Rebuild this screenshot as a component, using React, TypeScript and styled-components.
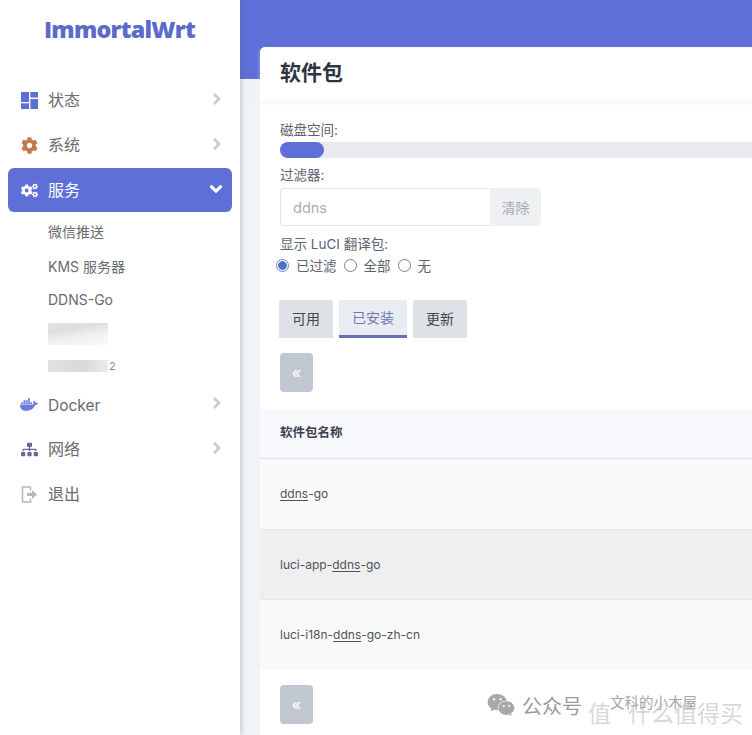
import React from "react";
import styled, { createGlobalStyle } from "styled-components";
import { FaCog, FaCogs, FaDocker, FaSitemap, FaAngleRight, FaAngleDown, FaWeixin } from "react-icons/fa";

const FONT = `Inter, "Noto Sans CJK SC", "Liberation Sans", sans-serif`;
const ACCENT = "#5e6fd8";

const Global = createGlobalStyle`
  html, body { margin: 0; padding: 0; width: 752px; height: 735px; overflow: hidden; background: #f1f3f9; }
  #root { width: 752px; height: 735px; }
  * { box-sizing: border-box; }
  body { font-family: ${FONT}; color: #525f6f; }
`;

const Shell = styled.div`
  position: relative;
  display: flex;
  width: 752px;
  height: 735px;
  overflow: hidden;
`;

const Sidebar = styled.aside`
  flex: 0 0 240px;
  height: 100%;
  background: #fff;
  box-shadow: 1px 0 5px rgba(90, 95, 120, 0.32);
  z-index: 1;
  padding: 0 8px;
`;

const Logo = styled.div`
  height: 78px;
  padding: 14px 0 0 36px;
  font-family: "Open Sans", sans-serif;
  font-size: 23.3px;
  line-height: 30px;
  font-weight: 800;
  letter-spacing: -0.75px;
  color: #5b6bc9;
  white-space: nowrap;
`;

const NavList = styled.nav`
  display: flex;
  flex-direction: column;
`;

const NavItem = styled.div<{ $active?: boolean }>`
  display: flex;
  align-items: center;
  height: 44px;
  margin-bottom: ${(p) => (p.$active ? "4px" : "1px")};
  padding: 0 6px 0 12px;
  border-radius: 6px;
  font-size: 16px;
  color: ${(p) => (p.$active ? "#fff" : "#666a72")};
  background: ${(p) => (p.$active ? ACCENT : "transparent")};
`;

const NavIcon = styled.span<{ $color?: string }>`
  display: flex;
  align-items: center;
  justify-content: center;
  flex: 0 0 18px;
  width: 18px;
  height: 18px;
  margin-right: 10px;
  color: ${(p) => p.$color ?? "inherit"};
`;

const NavLabel = styled.span<{ $latin?: boolean }>`
  flex: 1;
  margin-top: ${(p) => (p.$latin ? "2px" : "-2px")};
  font-size: ${(p) => (p.$latin ? "15.5px" : "16px")};
`;

const Chevron = styled.span<{ $active?: boolean }>`
  display: flex;
  margin-top: -2px;
  font-size: ${(p) => (p.$active ? "20px" : "18px")};
  color: ${(p) => (p.$active ? "#fff" : "#c9cbd0")};
`;

const SubItem = styled.div<{ $pad?: string; $h?: number }>`
  display: flex;
  align-items: center;
  height: ${(p) => p.$h ?? 33}px;
  padding: ${(p) => p.$pad ?? "0"};
  padding-left: 40px;
  font-size: 14px;
  color: #666b74;
`;

const Redacted = styled.div<{ $w: number; $h: number; $fade?: boolean }>`
  width: ${(p) => p.$w}px;
  height: ${(p) => p.$h}px;
  background: ${(p) =>
    p.$fade
      ? "linear-gradient(170deg,#e3e3e3 0%,#dedede 30%,#f0f0f0 60%,#fafafa 100%)"
      : "linear-gradient(90deg,#e2e2e2 0%,#d9d9d9 60%,#ececec 100%)"};
`;

const RedactedTail = styled.span`
  margin-left: 1px;
  font-size: 11px;
  line-height: 13px;
  color: #8d8d8d;
`;

const Main = styled.main`
  flex: 1;
  min-width: 0;
  height: 100%;
`;

const Band = styled.div`
  height: 79px;
  background: ${ACCENT};
`;

const Card = styled.section`
  margin: -32px 0 0 20px;
  width: 520px;
  height: 700px;
  background: #fff;
  border-top-left-radius: 5px;
`;

const CardHeader = styled.header`
  height: 54px;
  padding: 0 0 7px 20px;
  display: flex;
  align-items: center;
  font-size: 21px;
  font-weight: 700;
  color: #2f3342;
  box-shadow: 0 3px 4px rgba(240, 240, 245, 0.5);
`;

const Body = styled.div`
  padding: 20px 0 0 20px;
`;

const FieldLabel = styled.div`
  font-size: 13.5px;
  line-height: 18px;
  color: #5d6470;
`;

const Track = styled.div`
  height: 16px;
  margin: 3px 0 8px;
  background: #e9eaed;
  border-radius: 8px 0 0 8px;
`;

const Fill = styled.div`
  width: 44px;
  height: 100%;
  border-radius: 8px;
  background: ${ACCENT};
`;

const FilterRow = styled.div`
  display: flex;
  margin-top: 4px;
  height: 38px;
`;

const FilterInput = styled.div`
  width: 210px;
  padding-left: 12px;
  display: flex;
  align-items: center;
  font-size: 14.5px;
  color: #a8adb5;
  border: 1px solid #e4e6ea;
  border-right: 0;
  border-radius: 4px 0 0 4px;
`;

const ClearButton = styled.div`
  width: 51px;
  display: flex;
  align-items: center;
  justify-content: center;
  font-size: 14px;
  color: #a3a9b2;
  background: #eff0f1;
  border-radius: 0 4px 4px 0;
`;

const LuciLabel = styled(FieldLabel)`
  margin-top: 9px;
`;

const RadioRow = styled.div`
  display: flex;
  align-items: center;
  margin: 2px 0 0 -4px;
  height: 20px;
  font-size: 13.5px;
  color: #5d6470;
`;

const Radio = styled.span<{ $on?: boolean }>`
  flex: 0 0 13px;
  width: 13px;
  height: 13px;
  margin-right: 7px;
  border-radius: 50%;
  border: 1px solid ${(p) => (p.$on ? "#6d85c8" : "#7b7f86")};
  background: ${(p) => (p.$on ? "radial-gradient(circle,#4a73c9 0 4px,#fff 4.6px)" : "#fff")};
`;

const RadioText = styled.span`
  margin-right: 7px;
`;

const Tabs = styled.div`
  display: flex;
  gap: 6px;
  margin: 25px 0 0 -1px;
`;

const Tab = styled.div<{ $active?: boolean }>`
  height: 38px;
  padding: 0 13px 2px;
  display: flex;
  align-items: center;
  font-size: 14px;
  color: ${(p) => (p.$active ? "#6e79b8" : "#42474f")};
  background: ${(p) => (p.$active ? "#eaecf3" : "#dee1e6")};
  border-radius: 3px 3px 0 0;
  border-bottom: ${(p) => (p.$active ? "3px solid #6670b4" : "0")};
`;

const PageButton = styled.div`
  width: 33px;
  height: 39px;
  display: flex;
  align-items: center;
  justify-content: center;
  margin-top: 15px;
  font-size: 15px;
  font-weight: 700;
  color: #f2f3f5;
  background: #c1c7d0;
  border-radius: 4px;
`;

const Table = styled.div`
  margin: 17px 0 0 -20px;
`;

const HeadRow = styled.div`
  height: 50px;
  padding: 0 0 4px 20px;
  display: flex;
  align-items: center;
  font-size: 12.5px;
  font-weight: 700;
  color: #3a4050;
  background: #f6f8fc;
  border-bottom: 1px solid #dfe2ea;
`;

const Row = styled.div<{ $shade: string; $h: number }>`
  height: ${(p) => p.$h}px;
  padding: 0 0 1px 20px;
  display: flex;
  align-items: center;
  font-size: 12px;
  color: #4d535c;
  background: ${(p) => p.$shade};
  border-bottom: 1px solid #e6e6e8;
  &:last-child {
    border-bottom: 0;
  }
`;

const Hit = styled.u`
  text-decoration: underline;
  text-underline-offset: 2px;
`;

const Watermark = styled.div`
  position: absolute;
  left: 487px;
  top: 692px;
  display: flex;
  align-items: center;
  height: 26px;
  color: #9a9a9a;
  font-size: 20px;
  z-index: 2;
`;

const WatermarkIcon = styled.span`
  display: flex;
  font-size: 28px;
  margin-right: 7px;
  color: #a8a8a8;
`;

const WatermarkName = styled.span`
  position: absolute;
  left: 123px;
  top: -1px;
  font-size: 14.5px;
  white-space: nowrap;
  color: #a8a8a8;
`;

const WatermarkOverlay = styled.span`
  position: absolute;
  left: 101px;
  top: 3px;
  display: flex;
  gap: 17px;
  font-size: 23px;
  white-space: nowrap;
  color: rgba(175, 175, 175, 0.5);
`;

const DashIcon = () => (
  <svg width="17" height="17" viewBox="0 0 17 17" fill="#5e6fd0">
    <rect x="0" y="0" width="8" height="10" />
    <rect x="9.4" y="0" width="7.6" height="5.5" />
    <rect x="0" y="11.3" width="8" height="5.7" />
    <rect x="9.4" y="7" width="7.6" height="10" />
  </svg>
);

const ExitIcon = () => (
  <svg width="17" height="17" viewBox="0 0 17 17" fill="none">
    <path d="M9.5 1H1.5v15h8v-3.5" stroke="#b5b8bc" strokeWidth="1.6" />
    <path d="M9.5 1v3.5" stroke="#b5b8bc" strokeWidth="1.6" />
    <path d="M6 7h5V4l5 4.5-5 4.5v-3H6z" fill="#b5b8bc" />
  </svg>
);

const Arrow = () => (
  <Chevron>
    <FaAngleRight />
  </Chevron>
);

export default function App() {
  return (
    <Shell>
      <Global />
      <Sidebar>
        <Logo>ImmortalWrt</Logo>
        <NavList>
          <NavItem>
            <NavIcon><DashIcon /></NavIcon>
            <NavLabel>状态</NavLabel>
            <Arrow />
          </NavItem>
          <NavItem>
            <NavIcon $color="#c4784e"><FaCog size={17} /></NavIcon>
            <NavLabel>系统</NavLabel>
            <Arrow />
          </NavItem>
          <NavItem $active>
            <NavIcon><FaCogs size={17} /></NavIcon>
            <NavLabel>服务</NavLabel>
            <Chevron $active><FaAngleDown /></Chevron>
          </NavItem>
          <SubItem $pad="0 0 4px">微信推送</SubItem>
          <SubItem>KMS 服务器</SubItem>
          <SubItem $pad="2px 0 0">DDNS-Go</SubItem>
          <SubItem $pad="4px 0 0"><Redacted $w={60} $h={22} $fade /></SubItem>
          <SubItem $pad="2px 0 0" $h={34}><Redacted $w={60} $h={12} /><RedactedTail>2</RedactedTail></SubItem>
          <NavItem>
            <NavIcon $color="#6a7ae0"><FaDocker size={19} /></NavIcon>
            <NavLabel $latin>Docker</NavLabel>
            <Arrow />
          </NavItem>
          <NavItem>
            <NavIcon $color="#666a92"><FaSitemap size={17} /></NavIcon>
            <NavLabel>网络</NavLabel>
            <Arrow />
          </NavItem>
          <NavItem>
            <NavIcon><ExitIcon /></NavIcon>
            <NavLabel>退出</NavLabel>
          </NavItem>
        </NavList>
      </Sidebar>
      <Main>
        <Band />
        <Card>
          <CardHeader>软件包</CardHeader>
          <Body>
            <FieldLabel>磁盘空间:</FieldLabel>
            <Track><Fill /></Track>
            <FieldLabel>过滤器:</FieldLabel>
            <FilterRow>
              <FilterInput>ddns</FilterInput>
              <ClearButton>清除</ClearButton>
            </FilterRow>
            <LuciLabel>显示 LuCI 翻译包:</LuciLabel>
            <RadioRow>
              <Radio $on /><RadioText>已过滤</RadioText>
              <Radio /><RadioText>全部</RadioText>
              <Radio /><RadioText>无</RadioText>
            </RadioRow>
            <Tabs>
              <Tab>可用</Tab>
              <Tab $active>已安装</Tab>
              <Tab>更新</Tab>
            </Tabs>
            <PageButton>«</PageButton>
            <Table>
              <HeadRow>软件包名称</HeadRow>
              <Row $shade="#fafafa" $h={71}><span><Hit>ddns</Hit>-go</span></Row>
              <Row $shade="#efefef" $h={70}><span>luci-app-<Hit>ddns</Hit>-go</span></Row>
              <Row $shade="#f9f9f9" $h={70}><span>luci-i18n-<Hit>ddns</Hit>-go-zh-cn</span></Row>
            </Table>
            <PageButton>«</PageButton>
          </Body>
        </Card>
      </Main>
      <Watermark>
        <WatermarkIcon><FaWeixin /></WatermarkIcon>
        公众号
        <WatermarkName>文科的小木屋</WatermarkName>
        <WatermarkOverlay><span>值</span><span>什么值得买</span></WatermarkOverlay>
      </Watermark>
    </Shell>
  );
}
